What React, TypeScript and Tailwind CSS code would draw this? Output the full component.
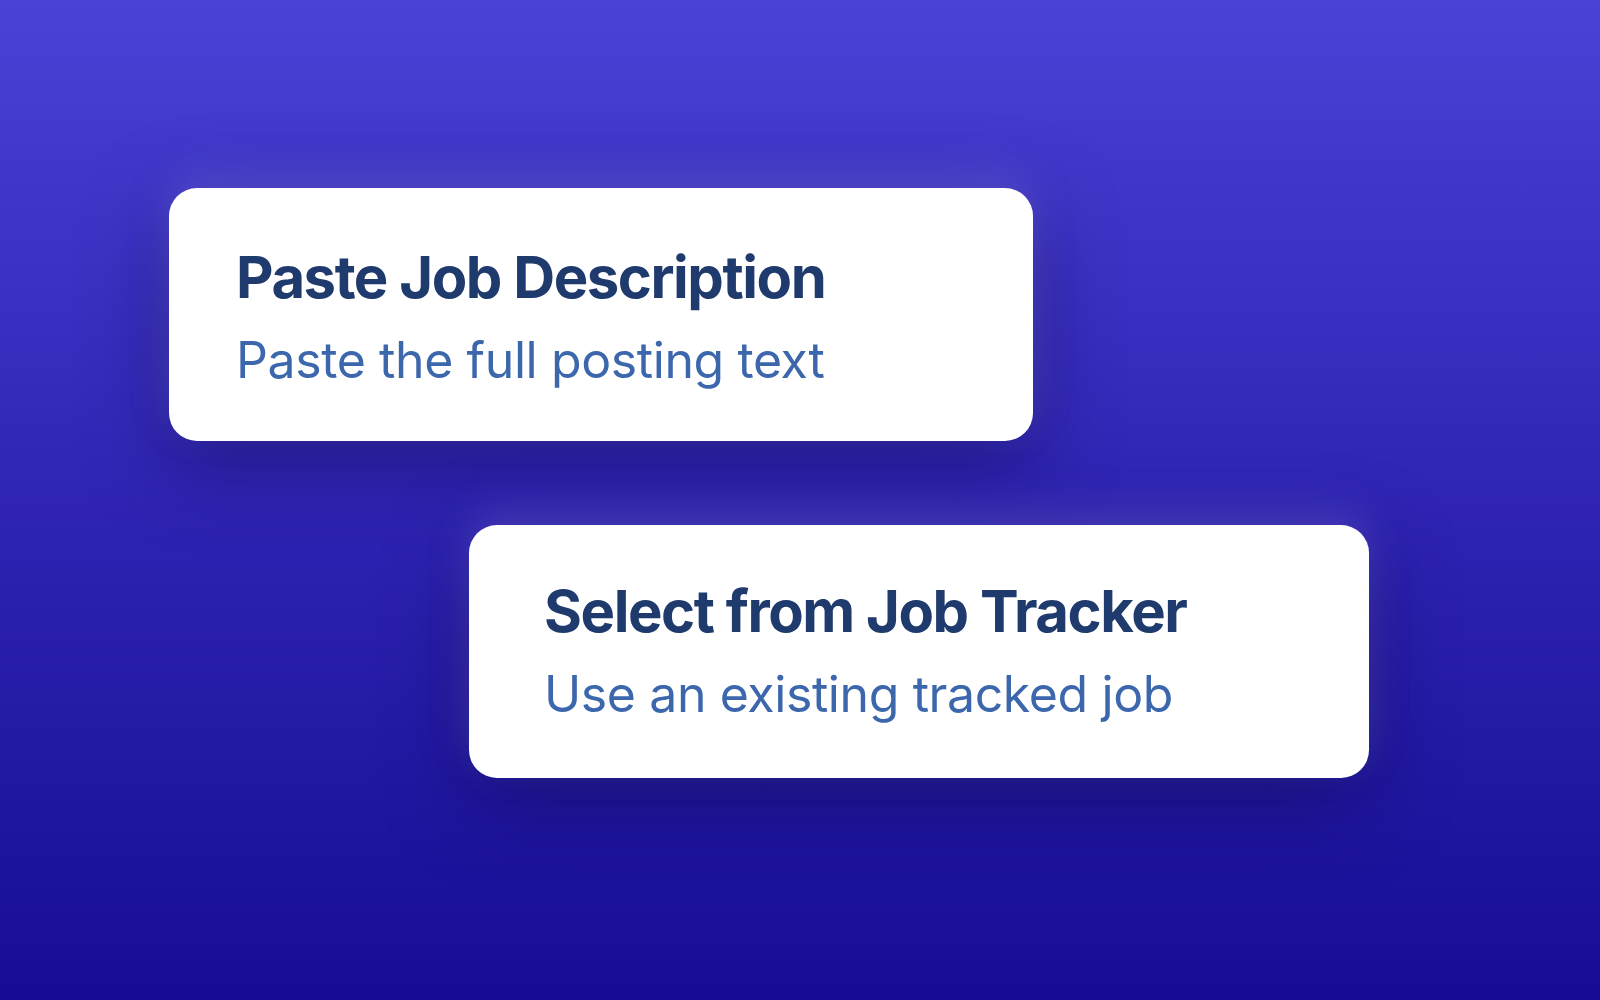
import React from 'react';

interface OptionCardProps {
  title: string;
  subtitle: string;
  className?: string;
}

const OptionCard: React.FC<OptionCardProps> = ({ title, subtitle, className }) => (
  <div
    className={`bg-white rounded-[28px] h-[253px] flex flex-col shadow-[0_-14px_40px_rgba(170,160,255,0.22),0_20px_80px_rgba(12,6,70,0.5)] ${className ?? ''}`}
  >
    <h2 className="text-[58px] leading-none font-bold tracking-[-0.025em] text-[#1f3a6c]">{title}</h2>
    <p className="mt-[29px] text-[50px] leading-none font-normal tracking-[-0.008em] text-[#3d67ad]">{subtitle}</p>
  </div>
);

export default function App() {
  return (
    <div
      className="w-full h-[1000px] overflow-hidden bg-gradient-to-b from-[#4a41d6] via-[#2f24b4] to-[#160b94] pt-[188px]"
      style={{ fontFamily: 'Inter, "Noto Sans", sans-serif' }}
    >
      <div className="flex flex-col gap-[84px]">
        <OptionCard
          title="Paste Job Description"
          subtitle="Paste the full posting text"
          className="ml-[169px] w-[864px] pl-[67px] pt-[60px]"
        />
        <OptionCard
          title="Select from Job Tracker"
          subtitle="Use an existing tracked job"
          className="ml-[469px] w-[900px] pl-[75px] pt-[57px]"
        />
      </div>
    </div>
  );
}
